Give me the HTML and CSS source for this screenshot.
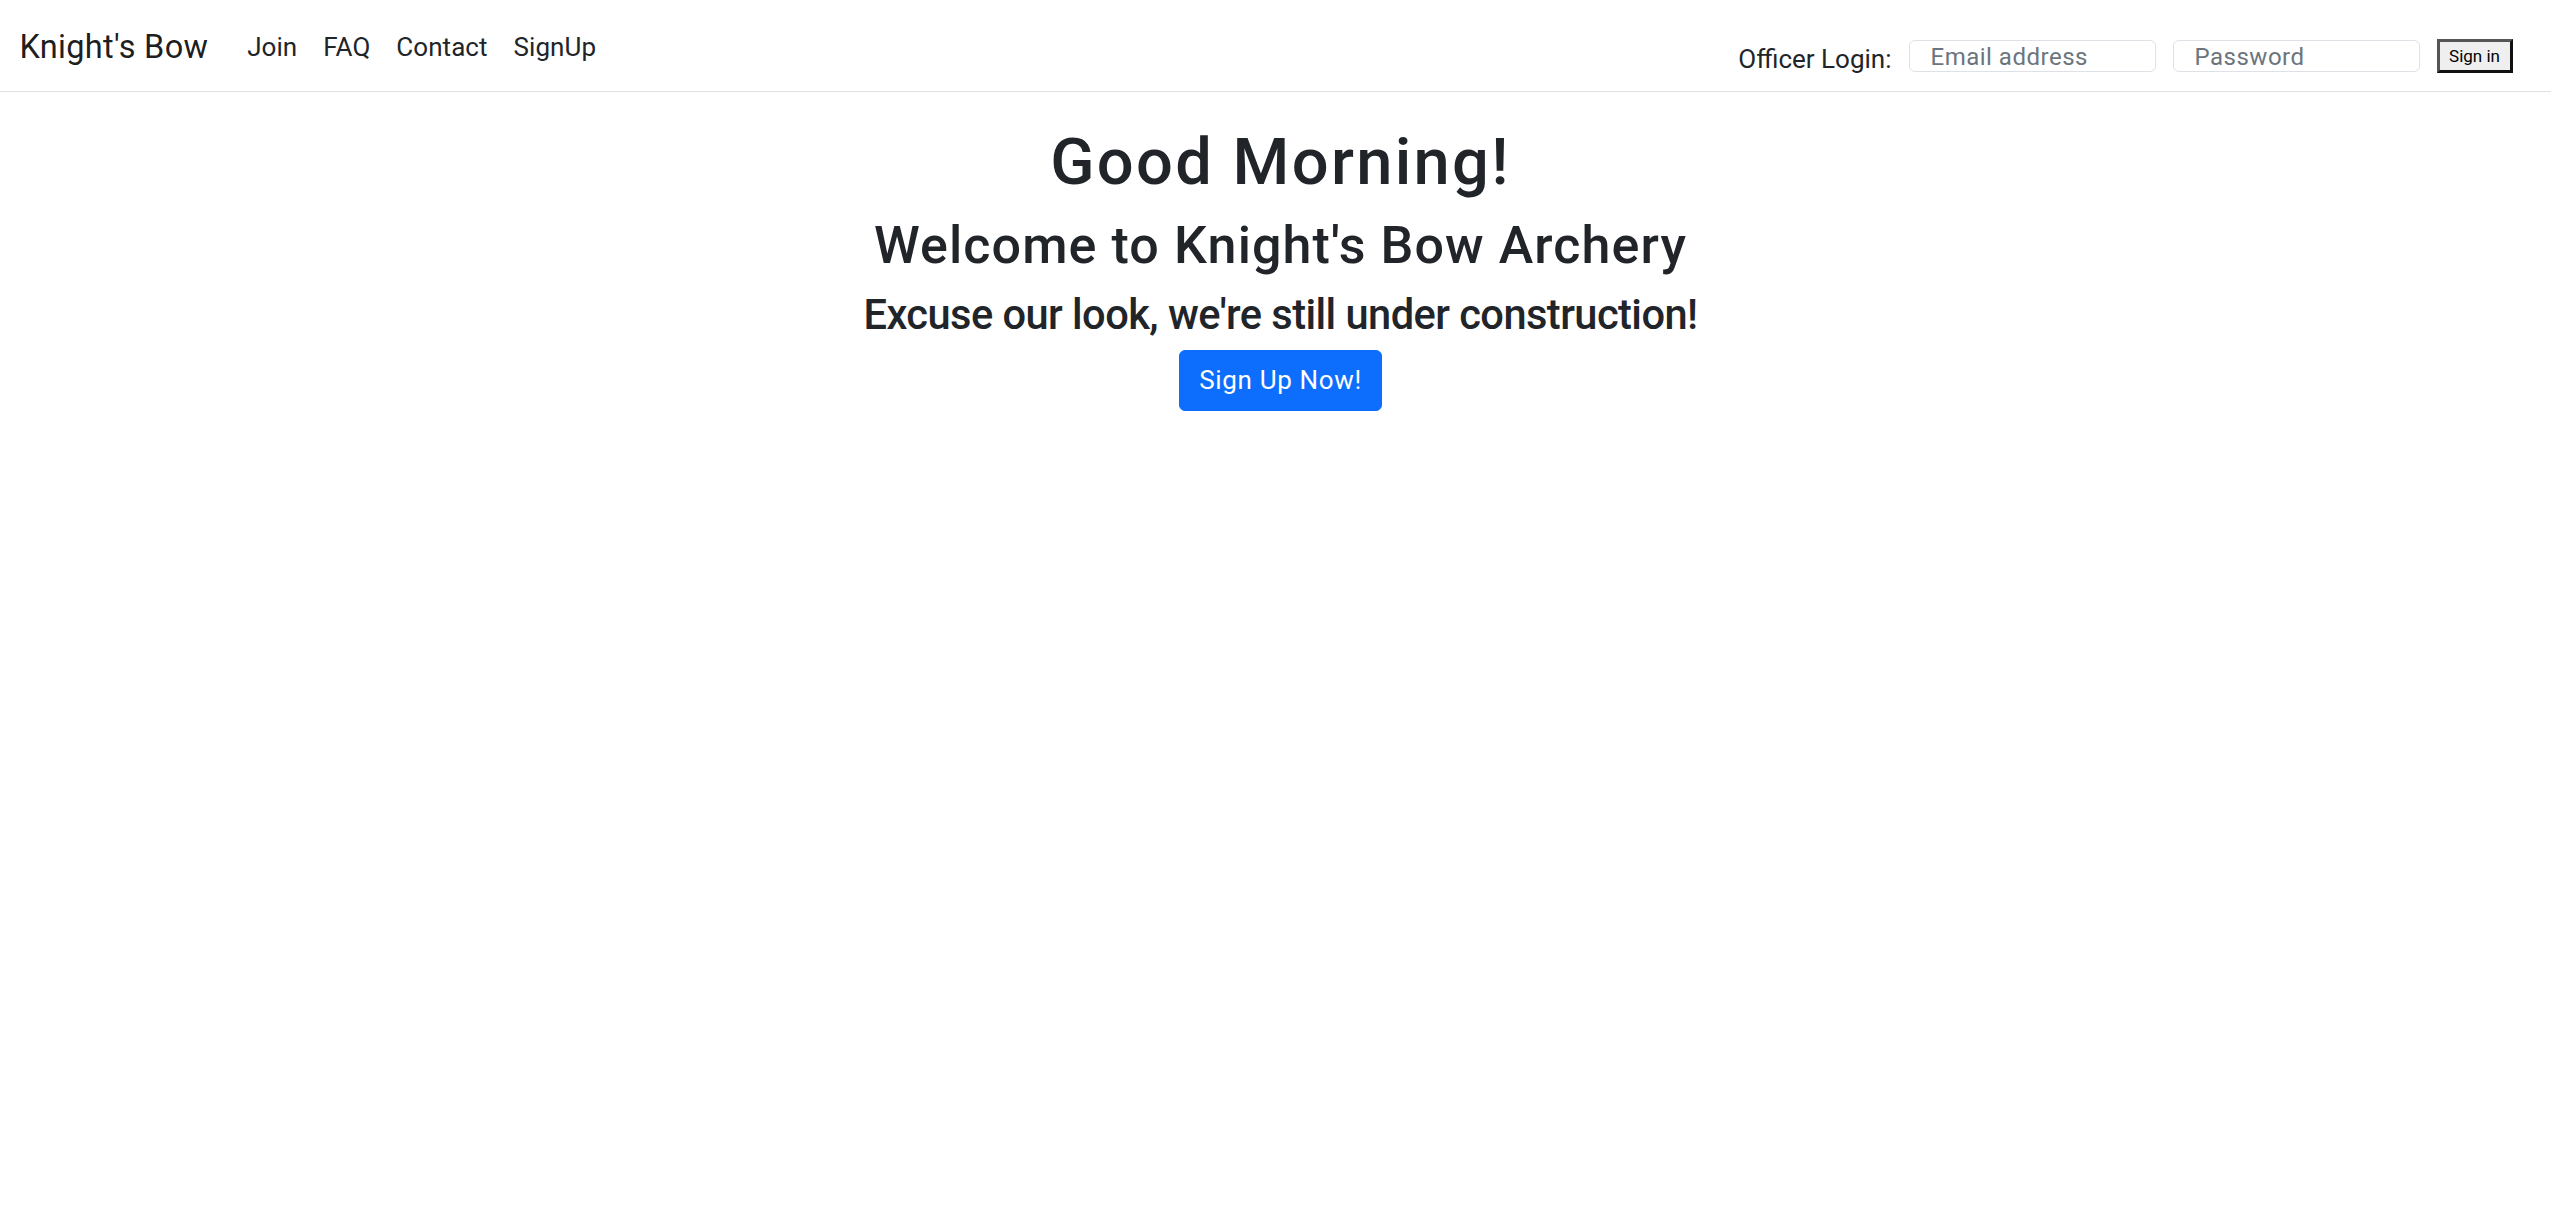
FILE: index.html
```html
<!DOCTYPE html>
<html lang="en">
<head>
<meta charset="utf-8">
<title>Knight's Bow Archery</title>
<link rel="stylesheet" href="styles.css">
</head>
<body>
<nav class="navbar">
  <div class="nav-inner">
    <a class="brand" href="#">Knight's Bow</a>
    <ul class="nav-links">
      <li><a class="nav-link" href="#">Join</a></li>
      <li><a class="nav-link" href="#">FAQ</a></li>
      <li><a class="nav-link" href="#">Contact</a></li>
      <li><a class="nav-link" href="#">SignUp</a></li>
    </ul>
    <form class="login">
      <label class="login-label">Officer Login:</label>
      <input class="login-input" type="email" placeholder="Email address">
      <input class="login-input" type="password" placeholder="Password">
      <button class="login-btn" type="button">Sign in</button>
    </form>
  </div>
</nav>
<main class="hero">
  <h1 class="hero-title">Good Morning!</h1>
  <h2 class="hero-sub">Welcome to Knight's Bow Archery</h2>
  <h3 class="hero-note">Excuse our look, we're still under construction!</h3>
  <a class="btn-primary" href="#">Sign Up Now!</a>
</main>
</body>
</html>
```
FILE: styles.css
```css
* { box-sizing: border-box; }
html, body { margin: 0; padding: 0; background: #fff; }
body {
  font-family: Roboto, "Open Sans", sans-serif;
  font-size: 26px;
  line-height: 1.5;
  color: #212529;
}
a { text-decoration: none; }

.navbar {
  padding: 13px 0;
  border-bottom: 1px solid #dee2e6;
}
.nav-inner {
  display: flex;
  align-items: center;
  padding: 0 19.5px;
  height: 65px;
}
.brand {
  font-size: 32.5px;
  line-height: 1.5;
  padding: 7px 0 3px;
  margin-right: 26px;
  letter-spacing: 0.3px;
  color: rgba(0, 0, 0, 0.9);
}
.nav-links {
  display: flex;
  list-style: none;
  margin: 0;
  padding: 0;
}
.nav-link {
  display: block;
  padding: 15px 13px 11px;
  font-size: 26px;
  line-height: 39px;
  letter-spacing: 0.05px;
  color: #212529;
}
.login {
  margin-left: auto;
  margin-top: 21px;
  margin-right: 19px;
  display: flex;
  align-items: center;
  gap: 17px;
}
.login-label {
  font-size: 26px;
  line-height: 39px;
  padding-top: 6px;
  color: #212529;
}
.login-input {
  width: 247px;
  height: 32px;
  border: 1px solid #dee2e6;
  border-radius: 6px;
  padding: 2px 0 0 21px;
  font-family: inherit;
  font-size: 24px;
  letter-spacing: 0.5px;
  color: #212529;
  background: #fff;
}
.login-input::placeholder { color: #6c757d; }
.login-btn {
  width: 76px;
  height: 34px;
  padding: 0;
  font-family: inherit;
  font-size: 17px;
  color: #000;
  background: #efefef;
  border-style: solid;
  border-width: 3px;
  border-color: #555 #111 #111 #555;
}

.hero {
  display: flex;
  flex-direction: column;
  align-items: center;
  text-align: center;
  padding-top: 31px;
  padding-left: 10px;
}
.hero-title, .hero-sub, .hero-note {
  margin: 0 0 13px;
  font-weight: 500;
  line-height: 1.2;
  color: #212529;
}
.hero-title { font-size: 65px; letter-spacing: 2.3px; margin-bottom: 14px; }
.hero-sub { font-size: 52px; letter-spacing: 1.1px; }
.hero-note { font-size: 41.6px; letter-spacing: -0.55px; margin-bottom: 10px; }
.btn-primary {
  display: block;
  padding: 9.75px 19.5px;
  font-size: 26px;
  line-height: 39px;
  letter-spacing: 0.65px;
  color: #fff;
  background: #0d6efd;
  border: 1px solid #0d6efd;
  border-radius: 6px;
}
```
